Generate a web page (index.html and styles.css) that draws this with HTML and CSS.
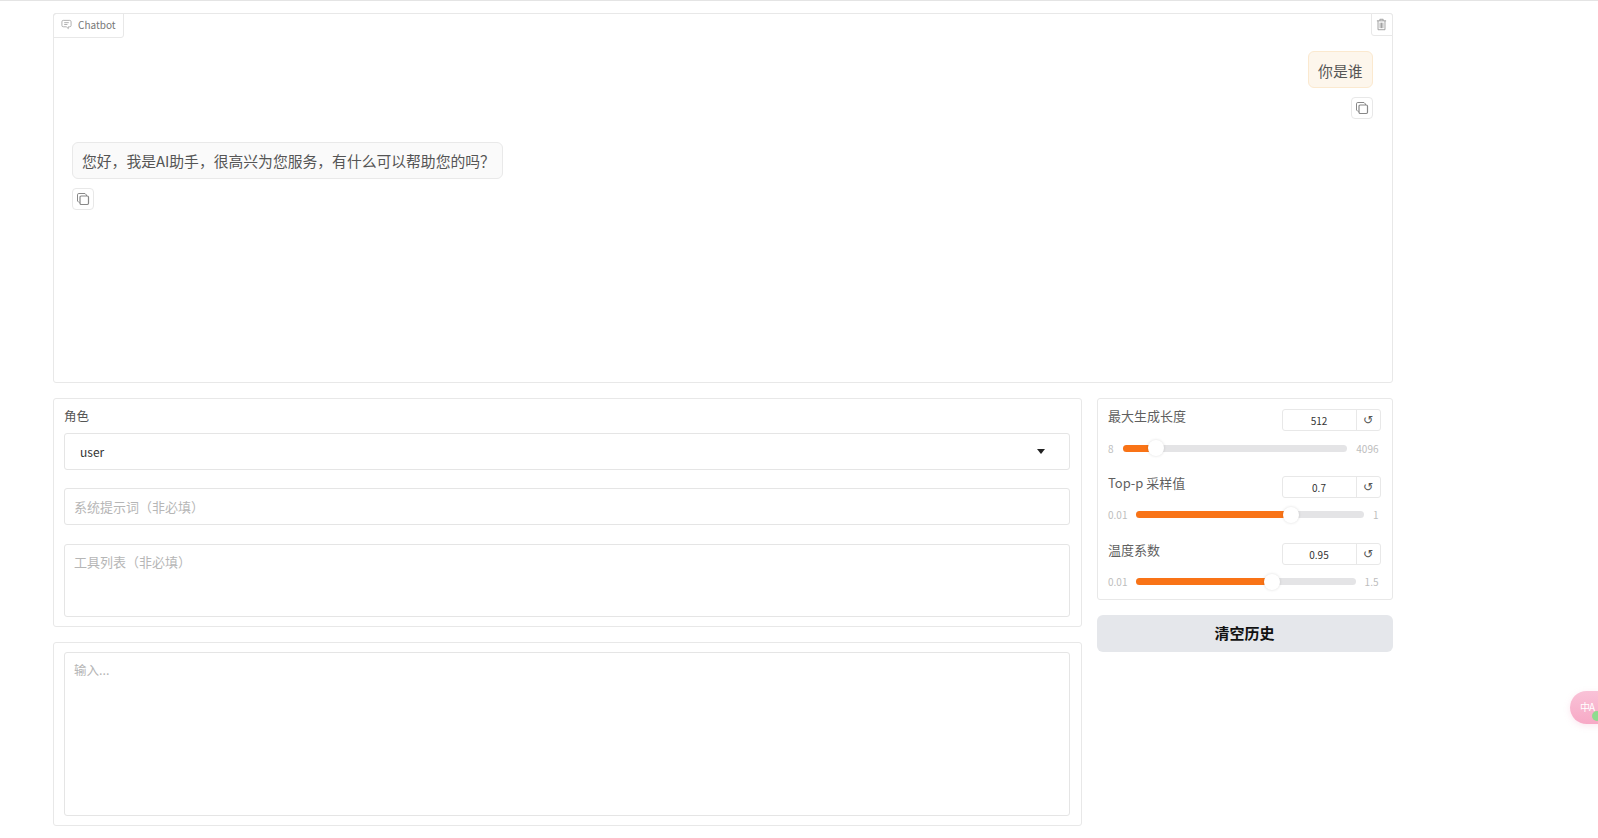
FILE: index.html
```html
<!DOCTYPE html>
<html lang="zh">
<head>
<meta charset="utf-8">
<title>Chatbot</title>
<link rel="stylesheet" href="styles.css">
</head>
<body>
<svg class="defs" width="0" height="0" aria-hidden="true">
  <symbol id="copy" viewBox="0 0 14 14"><path d="M3.500 10.500H3L1.500 9V2.800A1.300 1.300 0 0 1 2.800 1.500H9L10.500 3V4" fill="none" stroke="currentColor"/><rect x="4" y="4" width="8.500" height="8.500" rx="1.200" fill="none" stroke="currentColor" stroke-width="1.200"/></symbol>
</svg>
<div class="page">
  <section class="panel chat">
    <div class="tab">
      <svg class="tab-icon" viewBox="0 0 12 12"><path d="M2.500 1.500h7A1.500 1.500 0 0 1 11 3v4A1.500 1.500 0 0 1 9.500 8.500H8V10.500L5.800 8.500H2.500A1.500 1.500 0 0 1 1 7V3A1.500 1.500 0 0 1 2.500 1.500ZM3.500 4H8.500M3.500 6H7" fill="none" stroke="currentColor"/></svg>
      <span>Chatbot</span>
    </div>
    <button class="trash" type="button" aria-label="清除">
      <svg viewBox="0 0 12 14" width="11" height="13"><path d="M1 3H11M4.200 3V1.300H7.800V3M2.200 3V12.700H9.800V3M4.500 5V11M6 5V11M7.500 5V11" fill="none" stroke="currentColor"/></svg>
    </button>
    <div class="messages">
      <div class="msg msg-user">
        <div class="bubble bubble-user">你是谁</div>
        <button class="copy" type="button" aria-label="复制"><svg width="14" height="14"><use href="#copy"/></svg></button>
      </div>
      <div class="msg msg-bot">
        <div class="bubble bubble-bot">您好，我是AI助手，很高兴为您服务，有什么可以帮助您的吗？</div>
        <button class="copy" type="button" aria-label="复制"><svg width="14" height="14"><use href="#copy"/></svg></button>
      </div>
    </div>
  </section>

  <div class="columns">
    <div class="col-left">
      <section class="panel form">
        <div class="field">
          <label class="field-label">角色</label>
          <div class="select"><span>user</span><i class="caret"></i></div>
        </div>
        <input class="box input" type="text" placeholder="系统提示词（非必填）">
        <textarea class="box tools" placeholder="工具列表（非必填）"></textarea>
      </section>
      <section class="panel prompt">
        <textarea class="box main-input" placeholder="输入..."></textarea>
      </section>
    </div>

    <div class="col-right">
      <section class="panel sliders">
        <div class="slider">
          <div class="slider-head">
            <span class="slider-label">最大生成长度</span>
            <div class="num"><span class="num-value">512</span><span class="num-reset">↺</span></div>
          </div>
          <div class="slider-row">
            <span class="limit">8</span>
            <div class="track"><div class="fill" style="width:15%"></div><i class="thumb" style="left:15%"></i></div>
            <span class="limit">4096</span>
          </div>
        </div>
        <div class="slider">
          <div class="slider-head">
            <span class="slider-label">Top-p 采样值</span>
            <div class="num"><span class="num-value">0.7</span><span class="num-reset">↺</span></div>
          </div>
          <div class="slider-row">
            <span class="limit">0.01</span>
            <div class="track"><div class="fill" style="width:68%"></div><i class="thumb" style="left:68%"></i></div>
            <span class="limit">1</span>
          </div>
        </div>
        <div class="slider">
          <div class="slider-head">
            <span class="slider-label">温度系数</span>
            <div class="num"><span class="num-value">0.95</span><span class="num-reset">↺</span></div>
          </div>
          <div class="slider-row">
            <span class="limit">0.01</span>
            <div class="track"><div class="fill" style="width:62%"></div><i class="thumb" style="left:62%"></i></div>
            <span class="limit">1.5</span>
          </div>
        </div>
      </section>
      <button class="clear" type="button">清空历史</button>
    </div>
  </div>
</div>
<div class="translate">
  <span class="translate-text">中A</span>
  <i class="translate-badge"></i>
</div>
</body>
</html>
```
FILE: styles.css
```css
* { box-sizing: border-box; }
html, body { margin: 0; height: 100%; overflow: hidden; background: #fff; }
body {
  font-family: "Noto Sans CJK SC", "Noto Sans", sans-serif;
  color: #555;
  border-top: 1px solid #e4e4e4;
}
.defs { position: absolute; }
.page { width: 1392.500px; padding: 12px 0 0 53px; }
.panel {
  background: #fff;
  border: 1px solid #e8e8e8;
  border-radius: 3px;
}
button { font-family: inherit; cursor: pointer; }

/* chat */
.chat { position: relative; height: 370px; }
.tab {
  position: absolute; left: -1px; top: -1px;
  width: 71px; height: 25px;
  display: flex; align-items: center; gap: 6px;
  padding: 0 0 2px 7px;
  font-size: 10px; color: #777;
  border: 1px solid #e8e8e8;
  border-radius: 3px 0 3px 0;
}
.tab-icon { width: 11px; height: 11px; color: #aaa; flex: none; }
.trash {
  position: absolute; right: -1px; top: -1px;
  width: 22px; height: 23px; padding: 0 1px 0 0;
  display: flex; align-items: center; justify-content: center;
  background: #fff; color: #999;
  border: 1px solid #e8e8e8;
  border-radius: 0 3px 0 3px;
}
.messages { padding: 37px 19px 0 18px; display: flex; flex-direction: column; gap: 23px; }
.msg { display: flex; flex-direction: column; gap: 9px; }
.msg-user { align-items: flex-end; }
.msg-bot { align-items: flex-start; }
.bubble {
  height: 37px; padding: 0 9px;
  display: flex; align-items: center;
  font-size: 14.800px; color: #555;
  border-radius: 6px;
  white-space: nowrap;
}
.bubble-user { background: #fdf6ec; border: 1px solid #fbe9cf; padding-top: 1px; }
.bubble-bot { background: #fafafa; border: 1px solid #e9e9e9; width: 431px; }
.copy {
  width: 22px; height: 22px; padding: 0;
  display: flex; align-items: center; justify-content: center;
  background: #fff; color: #888;
  border: 1px solid #e8e8e8; border-radius: 4px;
}

/* columns */
.columns { display: flex; gap: 14.500px; margin-top: 15px; align-items: flex-start; }
.col-left { width: 1029px; display: flex; flex-direction: column; gap: 15px; }
.col-right { width: 296px; display: flex; flex-direction: column; gap: 15px; }

/* form */
.form { height: 229px; padding: 7px 11px 0 10px; display: flex; flex-direction: column; }
.field-label { display: block; height: 27px; font-size: 12.500px; line-height: 20px; color: #555; }
.select {
  height: 37px; padding: 0 24px 0 15px;
  display: flex; align-items: center; justify-content: space-between;
  font-size: 12px; color: #333;
  border: 1px solid #e5e5e5; border-radius: 3px;
}
.caret {
  width: 0; height: 0;
  border-left: 4.500px solid transparent;
  border-right: 4.500px solid transparent;
  border-top: 5px solid #222;
}
.box {
  display: block; width: 100%;
  border: 1px solid #e5e5e5; border-radius: 3px;
  font-family: inherit; font-size: 13px; color: #555;
  padding: 0 9px; outline: none; resize: none;
  background: #fff;
}
.box::placeholder { color: #b6b6b6; opacity: 1; }
.input { height: 37px; margin-top: 18px; }
.tools { height: 73px; margin-top: 19px; padding-top: 7px; }
.prompt { height: 184px; padding: 9px 11px 0 10px; }
.main-input { height: 164px; padding-top: 7px; font-size: 12.500px; }

/* sliders */
.sliders { height: 202px; padding: 11px 11px 0 10.500px; }
.slider { height: 66.800px; }
.slider-head { display: flex; justify-content: space-between; align-items: flex-start; height: 29px; }
.slider-label { font-size: 13px; line-height: 16px; margin-top: -2px; color: #5f5f5f; }
.num {
  display: flex; width: 99px; height: 22px; margin-top: -1px;
  border: 1px solid #e8e8e8; border-radius: 3px;
  font-size: 10px; color: #333;
}
.num-value { flex: 1; text-align: center; line-height: 22px; }
.num-reset {
  width: 24px; display: flex; align-items: center; justify-content: center;
  font-family: "DejaVu Sans", sans-serif; font-size: 12px;
  border-left: 1px solid #e8e8e8; color: #555;
}
.slider-row { display: flex; align-items: center; gap: 9px; height: 18px; padding-right: 2px; }
.limit { font-size: 10px; color: #bdbdbd; white-space: nowrap; }
.track { position: relative; flex: 1; height: 7px; background: #e4e4e6; border-radius: 4px; }
.fill { height: 100%; background: #f97316; border-radius: 4px 0 0 4px; }
.thumb {
  position: absolute; top: 50%;
  width: 16px; height: 16px; margin: -8px 0 0 -8px;
  background: #fff; border-radius: 50%;
  box-shadow: 0 0 3px rgba(0,0,0,.14);
}
.clear {
  width: 100%; height: 37px; padding: 0 0 2px;
  background: #e5e7eb; border: 0; border-radius: 6px;
  font-size: 15px; font-weight: 700; color: #111;
}

/* floating translate widget */
.translate {
  position: absolute; left: 1570px; top: 691px;
  width: 44px; height: 33px;
  padding-left: 10px;
  background: linear-gradient(180deg, #f9c2d7, #f7a9c6);
  border-radius: 17px;
  box-shadow: 0 2px 6px rgba(240,160,190,.25);
}
.translate-text { font-size: 10px; line-height: 31px; color: #fff; letter-spacing: -1px; }
.translate-badge {
  position: absolute; left: 22px; top: 20px;
  width: 10px; height: 10px;
  background: #8fdc8f; border-radius: 50%;
}
```
